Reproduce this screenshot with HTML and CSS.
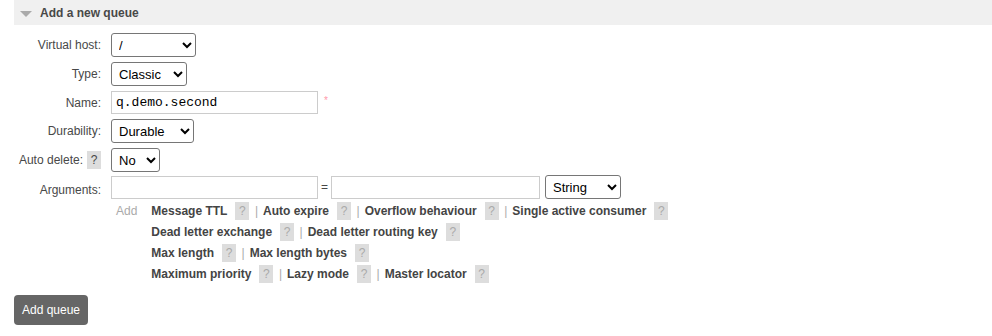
FILE: index.html
```html
<!DOCTYPE html>
<html>
<head>
    <title>Add a new queue</title>
    <link rel="stylesheet" href="styles.css">
</head>
<body>
    <div class="section">
        <h2 class="section-title"><span class="arrow"></span>Add a new queue</h2>
        <form class="queue-form">
            <label class="label">Virtual host:</label>
            <div class="field">
                <select class="sel sel-vhost"><option>/</option></select>
            </div>

            <label class="label">Type:</label>
            <div class="field">
                <select class="sel sel-type"><option>Classic</option></select>
            </div>

            <label class="label">Name:</label>
            <div class="field">
                <input class="text mono" type="text" value="q.demo.second">
                <span class="mand">*</span>
            </div>

            <label class="label">Durability:</label>
            <div class="field">
                <select class="sel sel-dur"><option>Durable</option></select>
            </div>

            <label class="label">Auto delete: <span class="help dark">?</span></label>
            <div class="field">
                <select class="sel sel-auto"><option>No</option></select>
            </div>

            <label class="label label-args">Arguments:</label>
            <div class="field args">
                <div class="arg-row">
                    <input class="text" type="text">
                    <span class="eq">=</span>
                    <input class="text wide" type="text">
                    <select class="sel sel-str"><option>String</option></select>
                </div>
                <div class="arg-help">
                    <span class="add">Add</span>
                    <div class="arg-lines">
                        <div class="arg-line">
                            <a>Message TTL</a><span class="help">?</span><span class="sep">|</span>
                            <a>Auto expire</a><span class="help">?</span><span class="sep">|</span>
                            <a>Overflow behaviour</a><span class="help">?</span><span class="sep">|</span>
                            <a>Single active consumer</a><span class="help">?</span>
                        </div>
                        <div class="arg-line">
                            <a>Dead letter exchange</a><span class="help">?</span><span class="sep">|</span>
                            <a>Dead letter routing key</a><span class="help">?</span>
                        </div>
                        <div class="arg-line">
                            <a>Max length</a><span class="help">?</span><span class="sep">|</span>
                            <a>Max length bytes</a><span class="help">?</span>
                        </div>
                        <div class="arg-line">
                            <a>Maximum priority</a><span class="help">?</span><span class="sep">|</span>
                            <a>Lazy mode</a><span class="help">?</span><span class="sep">|</span>
                            <a>Master locator</a><span class="help">?</span>
                        </div>
                    </div>
                </div>
            </div>
        </form>
        <button class="btn" type="button">Add queue</button>
    </div>
</body>
</html>
```

FILE: styles.css
```css
body {
    margin: 0;
    padding: 0 0 0 14px;
    font-family: "Liberation Sans", Arial, sans-serif;
    font-size: 12px;
    color: #484848;
    background: #fff;
}

.section-title {
    display: flex;
    align-items: center;
    height: 25px;
    margin: 0;
    padding-left: 26px;
    position: relative;
    background: #f0f0f0;
    font-size: 12px;
    font-weight: bold;
    color: #484848;
}

.arrow {
    position: absolute;
    left: 6px;
    top: 11px;
    width: 0;
    height: 0;
    border-left: 6px solid transparent;
    border-right: 6px solid transparent;
    border-top: 6px solid #aaa;
}

.queue-form {
    display: grid;
    grid-template-columns: 87px auto;
    column-gap: 10px;
    row-gap: 5px;
    margin-top: 8px;
}

.label {
    display: flex;
    justify-content: flex-end;
    align-items: center;
    height: 23px;
    white-space: nowrap;
}

.label-args {
    margin-top: 1px;
}

.field {
    display: flex;
    align-items: center;
}

.sel {
    height: 24px;
    font-family: "Liberation Sans", Arial, sans-serif;
    font-size: 13px;
    color: #000;
    background: #fff;
    border: 1px solid #767676;
    border-radius: 3px;
    padding: 0 0 0 3px;
}

.sel-vhost { width: 85px; }
.sel-type { width: 76px; }
.sel-dur { width: 83px; }
.sel-auto { width: 49px; }
.sel-str { width: 76px; margin-left: 5px; }

.text {
    box-sizing: border-box;
    width: 207px;
    height: 23px;
    border: 1px solid #ccc;
    padding: 0 4px;
    font-family: "Liberation Sans", Arial, sans-serif;
    font-size: 13px;
    color: #000;
}

.text.wide { width: 209px; }

.mono {
    font-family: "Liberation Mono", "Courier New", monospace;
    font-size: 13px;
}

.mand {
    color: #f9a;
    margin-left: 6px;
    font-size: 10px;
    align-self: flex-start;
    margin-top: 4px;
}

.eq {
    width: 13px;
    text-align: center;
}

.args {
    flex-direction: column;
    align-items: flex-start;
    margin-top: -2px;
}

.arg-row {
    display: flex;
    align-items: center;
}

.arg-help {
    display: flex;
    margin-top: 3px;
}

.add {
    color: #aaa;
    margin: 0 14px 0 5px;
    line-height: 18px;
}

.arg-lines {
    display: flex;
    flex-direction: column;
    gap: 3px;
}

.arg-line {
    display: flex;
    align-items: center;
    height: 18px;
    white-space: nowrap;
}

.arg-line a {
    font-weight: bold;
    color: #444;
}

.help {
    display: inline-block;
    width: 14px;
    height: 18px;
    line-height: 18px;
    text-align: center;
    background: #ddd;
    color: #aaa;
    margin-left: 8px;
}

.help.dark {
    color: #484848;
    margin-left: 4px;
}

.sep {
    color: #aaa;
    margin: 0 5px 0 5.5px;
}

.btn {
    display: block;
    margin-top: 12px;
    width: 74px;
    height: 30px;
    padding: 0;
    background: #666;
    color: #fff;
    border: none;
    border-radius: 4px;
    font-family: "Liberation Sans", Arial, sans-serif;
    font-size: 12px;
}
```
